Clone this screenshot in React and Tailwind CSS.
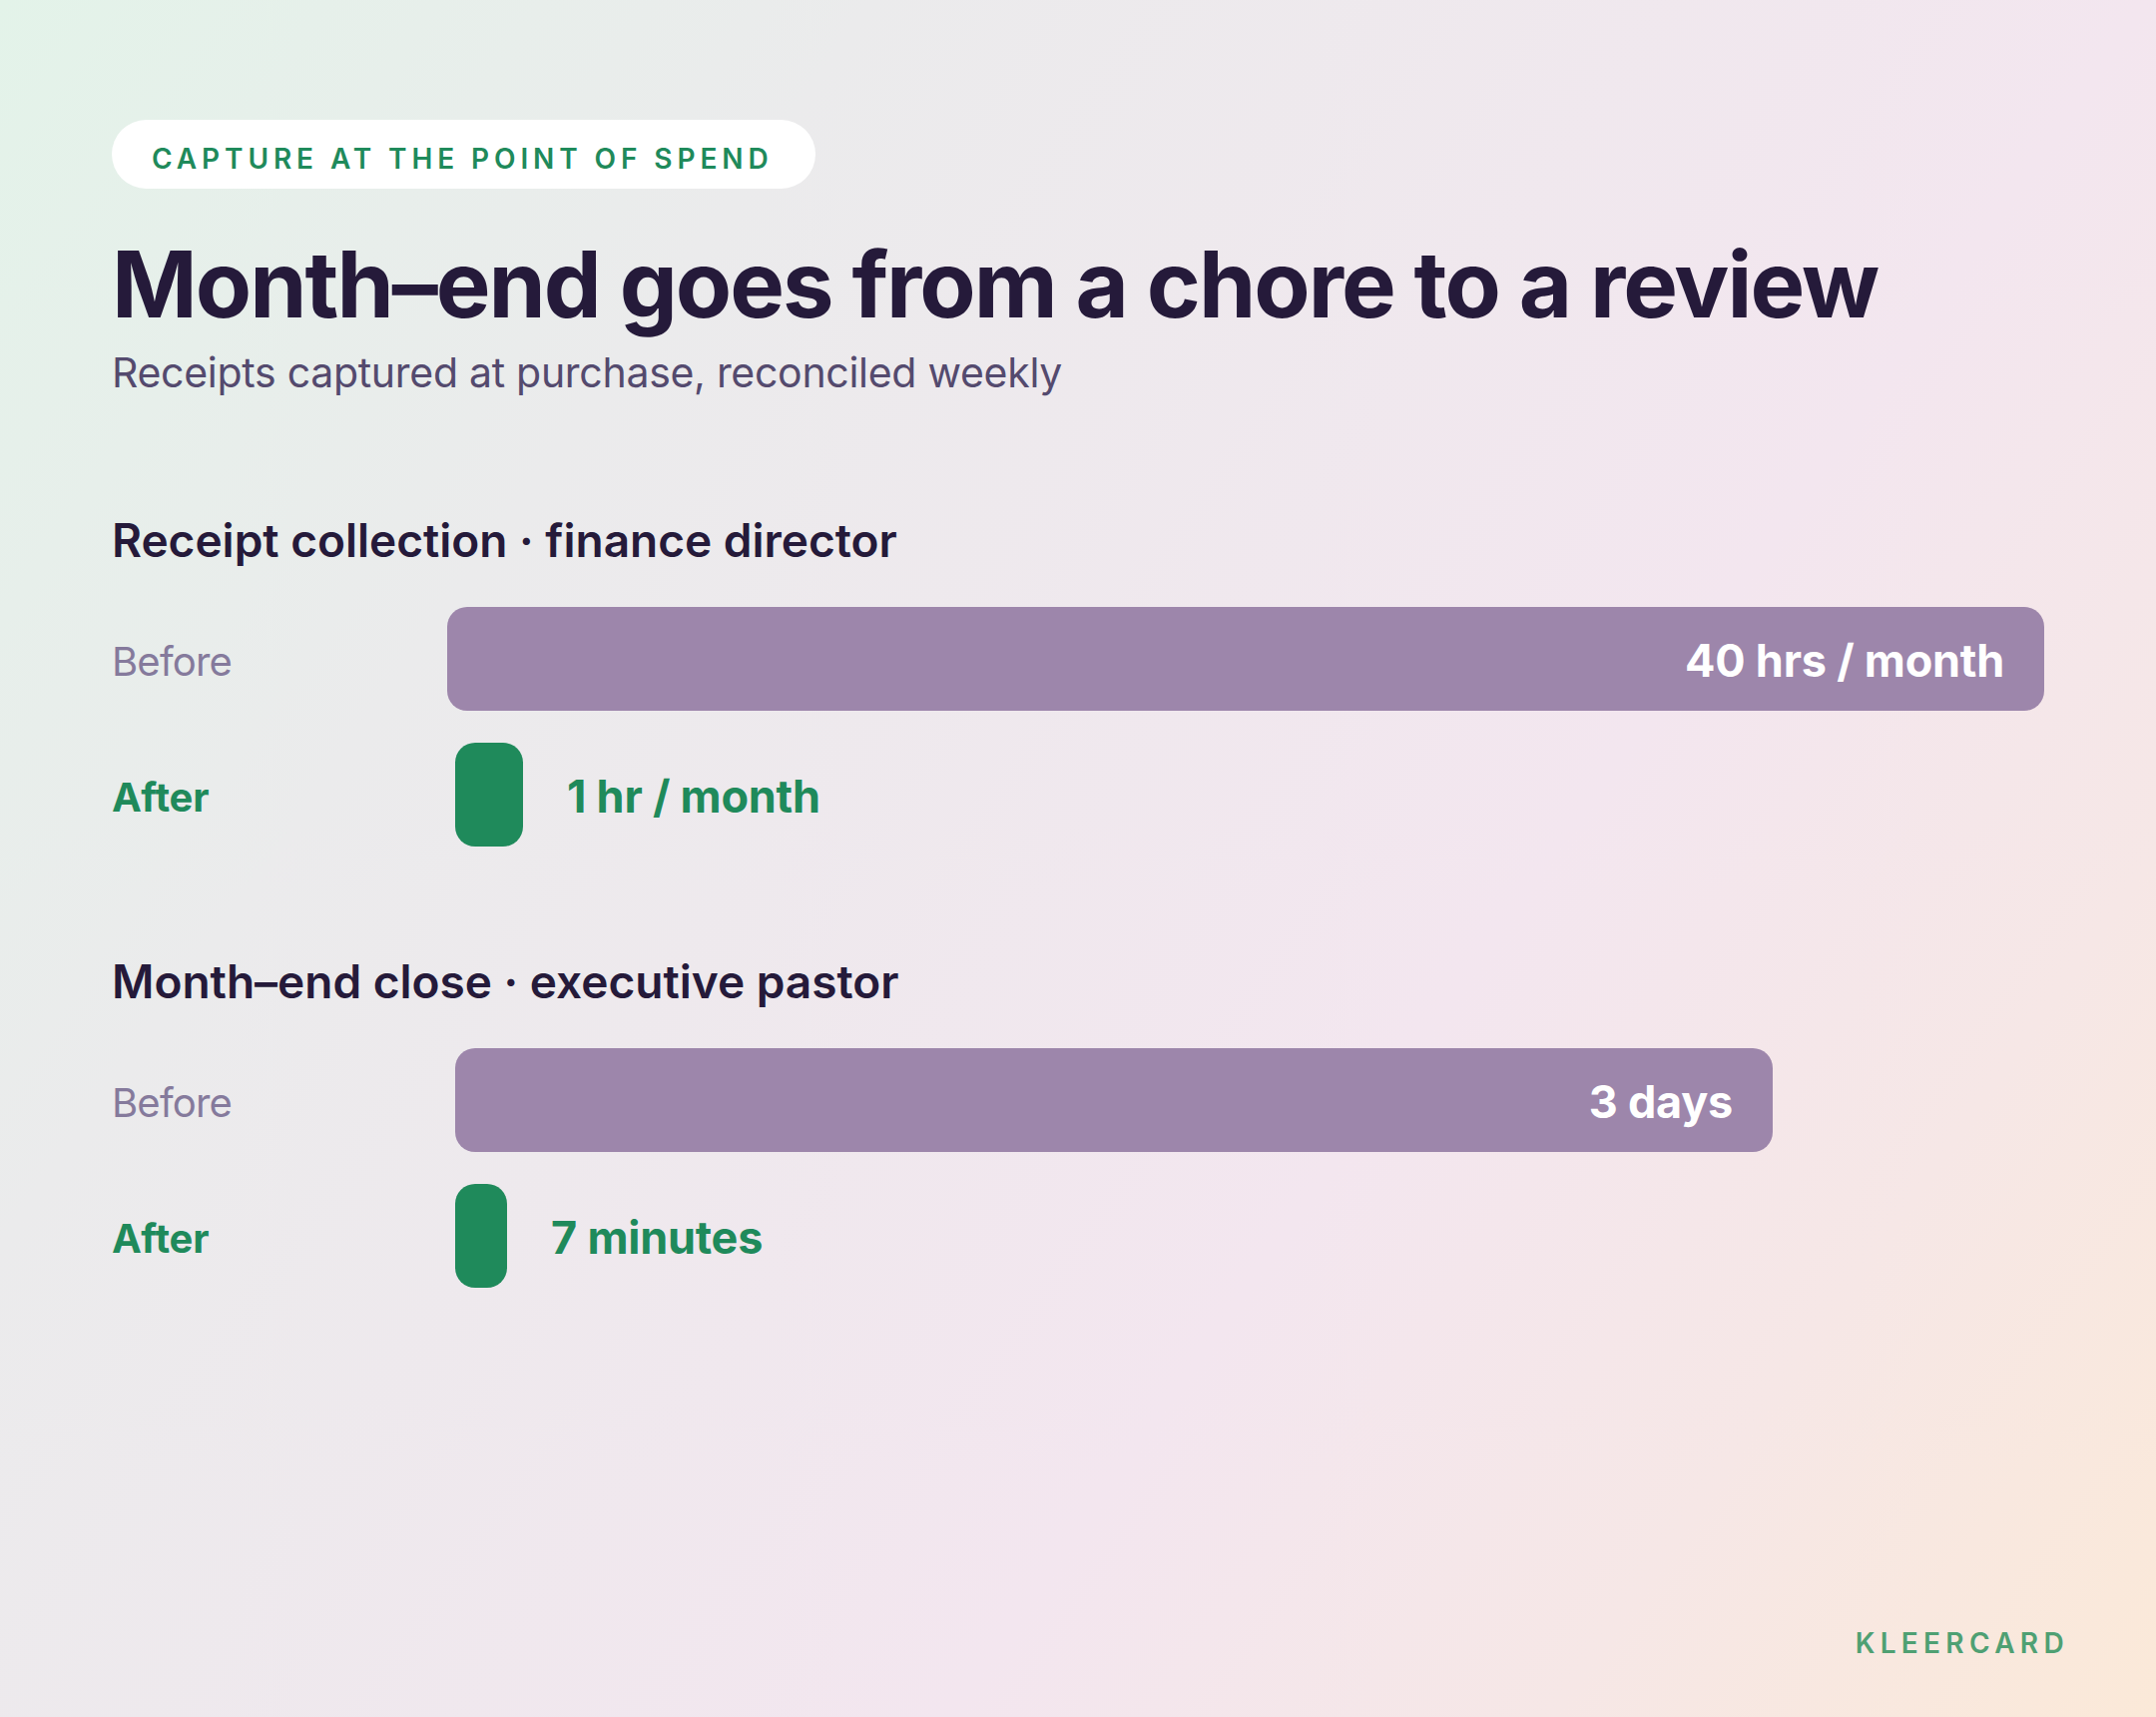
const sections = [
  {
    title: "Receipt collection · finance director",
    before: "40 hrs / month",
    beforeClass: "w-[1600px] -ml-2",
    after: "1 hr / month",
    afterClass: "w-[68px]",
  },
  {
    title: "Month–end close · executive pastor",
    before: "3 days",
    beforeClass: "w-[1320px]",
    after: "7 minutes",
    afterClass: "w-[52px]",
  },
];

function Section({ title, before, beforeClass, after, afterClass }) {
  return (
    <section className="mb-[103px]">
      <h2 className="text-[46px] leading-[64px] font-semibold text-[#251a3a]">{title}</h2>
      <div className="mt-[35px] flex items-center h-[104px]">
        <div className="w-[344px] pt-[5px] text-[40px] text-[#857a9c] tracking-[-0.02em]">Before</div>
        <div className={`h-[104px] rounded-[20px] bg-[#9d86ab] flex items-center justify-end pr-[40px] pt-[4px] text-[45px] font-bold tracking-[-0.005em] text-white ${beforeClass}`}>
          {before}
        </div>
      </div>
      <div className="mt-[32px] flex items-center h-[104px]">
        <div className="w-[344px] pt-[5px] text-[40px] font-bold tracking-[-0.005em] text-[#1f8a5b]">After</div>
        <div className={`h-[104px] rounded-[20px] bg-[#1f8a5b] ${afterClass}`} />
        <div className="ml-[44px] pt-[4px] text-[45px] font-bold tracking-[-0.005em] text-[#1f8a5b]">{after}</div>
      </div>
    </section>
  );
}

export default function App() {
  return (
    <div className="w-[2160px] h-[1720px] overflow-hidden flex flex-col px-[112px] pt-[120px] font-['Inter',sans-serif] bg-[linear-gradient(125deg,#e3f3e9_0%,#ebebec_26%,#f3e6ef_64%,#f6e7e6_82%,#fbe9d8_100%)]">
      <div className="self-start w-[705px] h-[69px] rounded-full bg-white flex items-center pl-[40px] pt-[8px] text-[28px] font-semibold tracking-[0.175em] text-[#1f8a5b] whitespace-nowrap">
        CAPTURE AT THE POINT OF SPEND
      </div>
      <h1 className="mt-[41px] text-[92px] leading-[110px] font-bold tracking-[-0.0215em] text-[#251a3a] whitespace-nowrap">
        Month–end goes from a chore to a review
      </h1>
      <p className="mt-[7px] text-[41px] leading-[52px] tracking-[-0.007em] text-[#544a6e]">
        Receipts captured at purchase, reconciled weekly
      </p>
      <div className="mt-[110px]">
        {sections.map((s) => (
          <Section key={s.title} {...s} />
        ))}
      </div>
      <div className="mt-auto mb-[53px] self-end -mr-[25px] text-[28px] font-semibold tracking-[0.19em] text-[#4fa073]">
        KLEERCARD
      </div>
    </div>
  );
}
